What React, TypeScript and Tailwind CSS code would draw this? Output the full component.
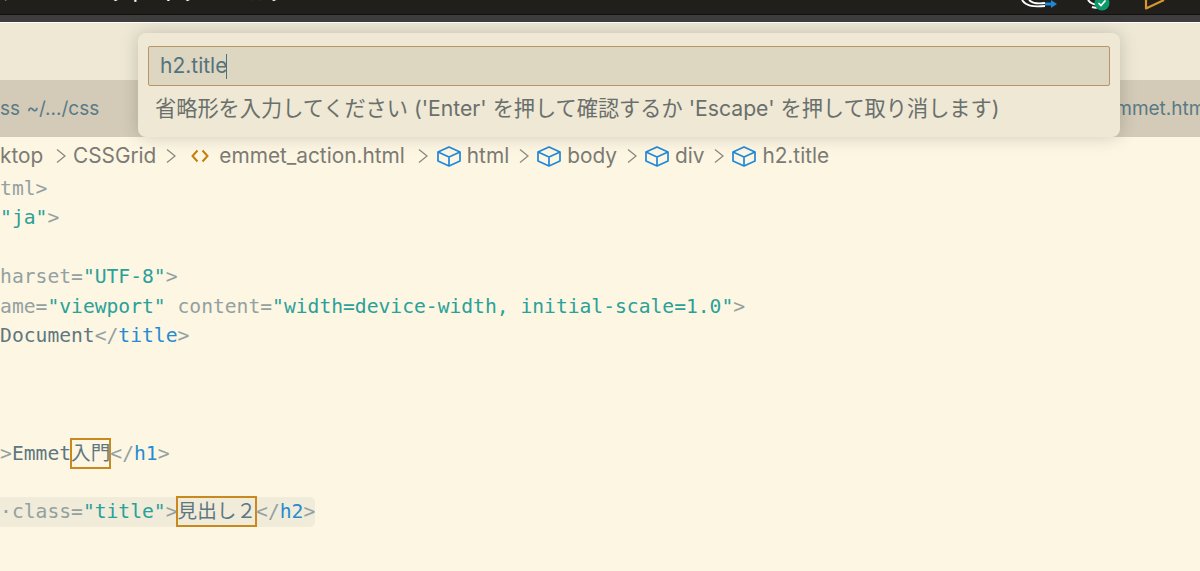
import React from "react";

const mono = "font-['DejaVu_Sans_Mono','Noto_Sans_CJK_JP',monospace]";
const sans = "font-['Inter','Noto_Sans_CJK_JP',sans-serif]";

const Chevron = () => (
  <svg width="10" height="18" viewBox="0 0 10 18" fill="none" stroke="#8a8a82" strokeWidth="1.3" className="shrink-0">
    <path d="M1 2.5 L9 9 L1 15.5" />
  </svg>
);

const Cube = () => (
  <svg width="24" height="21" viewBox="0 0 24 21" fill="none" stroke="#2088d8" strokeWidth="1.7" strokeLinejoin="round" className="shrink-0">
    <path d="M12 1 L23 6 L23 15 L12 20 L1 15 L1 6 Z" />
    <path d="M1 6 L12 11 L23 6 M12 11 L12 20" />
  </svg>
);

const B = ({ children }: { children: React.ReactNode }) => <span className="text-[#93a1a1]">{children}</span>;
const T = ({ children }: { children: React.ReactNode }) => <span className="text-[#268bd2]">{children}</span>;
const S = ({ children }: { children: React.ReactNode }) => <span className="text-[#2aa198]">{children}</span>;
const X = ({ children }: { children: React.ReactNode }) => <span className="text-[#5f777f]">{children}</span>;

const Line = ({ children }: { children?: React.ReactNode }) => (
  <div className="h-[29.4px] leading-[29px] whitespace-pre">{children}</div>
);

const Match = ({ children }: { children: React.ReactNode }) => (
  <span className="inline-block h-[29px] align-top text-[#5f777f] outline-2 -outline-offset-1 outline-[#c8891f]">{children}</span>
);

export default function App() {
  return (
    <div className="relative h-[571px] w-[1200px] overflow-hidden bg-[#fdf6e3]">
      {/* Desktop menu bar, cut off by the top of the picture */}
      <div className="h-[15px] overflow-hidden border-b border-[#111] bg-[#211f1c]">
        <div className="flex h-[15px] items-start justify-between">
          <div className={`-mt-[18px] flex gap-[34px] pl-[2px] text-[18px] font-medium leading-[24px] text-white ${sans}`}>
            <span>メニュー</span>
            <span>ウィンドウ</span>
            <span>ヘルプ</span>
          </div>
          <div className="flex items-start">
            <svg width="40" height="10" viewBox="0 0 40 10" fill="none" className="mr-[29px] shrink-0">
              <path d="M4 0 C8 6 14 7 27 6 M11 0 C15 4 20 4 27 3" stroke="#fff" strokeWidth="1.8" />
              <path d="M27 2.5 H33 V0 L39 4 L33 8 V5.5 H27 Z" fill="#1f86d6" />
            </svg>
            <svg width="24" height="12" viewBox="0 0 24 12" fill="none" className="mr-[33px] shrink-0">
              <path d="M1 0 C4 4 8 5 12 4 M5 7 C8 8 10 8 13 7" stroke="#fff" strokeWidth="2" />
              <circle cx="15" cy="3" r="7.5" fill="#0d9a6b" />
              <path d="M11.5 3 L14 5.5 L18.5 0.5" stroke="#fff" strokeWidth="1.7" />
            </svg>
            <svg width="24" height="10" viewBox="0 0 24 10" fill="none" className="mr-[32px] shrink-0">
              <path d="M2 0 L2 8.5 L20 0" stroke="#d9962a" strokeWidth="2.2" strokeLinejoin="round" />
            </svg>
          </div>
        </div>
      </div>
      <div className="h-[7px] bg-[#3d3d3d]" />
      <div className="h-[1px] bg-[#fff]" />

      {/* Title bar */}
      <div className="h-[57px] bg-[#eee8d5]" />

      {/* Tab bar */}
      <div className={`flex h-[57px] items-center justify-between bg-[#d3cbb7] pt-[1px] text-[19px] text-[#5a7a87] ${sans}`}>
        <div className="whitespace-pre">ss <span className="ml-[1px]">~/.../css</span></div>
        <div className="-mr-[10px] whitespace-pre">mmet.html</div>
      </div>

      {/* Breadcrumbs */}
      <div className={`flex h-[37px] items-center whitespace-pre pt-[1px] text-[20.8px] text-[#7b7b74] ${sans}`}>
        <span className="w-[56px]">ktop</span>
        <Chevron />
        <span className="ml-[7px]">CSSGrid</span>
        <span className="ml-[10px]"><Chevron /></span>
        <svg width="18" height="14" viewBox="0 0 18 14" fill="none" stroke="#c47f0a" strokeWidth="2" className="ml-[15px] shrink-0">
          <path d="M6.5 1.5 L1.5 7 L6.5 12.5 M11.5 1.5 L16.5 7 L11.5 12.5" />
        </svg>
        <span className="ml-[10px]">emmet_action.html</span>
        <span className="ml-[13px]"><Chevron /></span>
        <span className="ml-[9px]"><Cube /></span>
        <span className="ml-[6px]">html</span>
        <span className="ml-[10px]"><Chevron /></span>
        <span className="ml-[8px]"><Cube /></span>
        <span className="ml-[6px]">body</span>
        <span className="ml-[10px]"><Chevron /></span>
        <span className="ml-[8px]"><Cube /></span>
        <span className="ml-[6px]">div</span>
        <span className="ml-[10px]"><Chevron /></span>
        <span className="ml-[8px]"><Cube /></span>
        <span className="ml-[6px]">h2.title</span>
      </div>

      {/* Code */}
      <div className={`-ml-[130px] text-[19.65px] ${mono}`}>
        <Line><B>&lt;!DOCTYPE html&gt;</B></Line>
        <Line><B>&lt;</B><T>html</T> <B>lang=</B><S>"ja"</S><B>&gt;</B></Line>
        <Line><B>&lt;</B><T>head</T><B>&gt;</B></Line>
        <Line>    <B>&lt;</B><T>meta</T> <B>charset=</B><S>"UTF-8"</S><B>&gt;</B></Line>
        <Line>    <B>&lt;</B><T>meta</T> <B>name=</B><S>"viewport"</S> <B>content=</B><S>"width=device-width, initial-scale=1.0"</S><B>&gt;</B></Line>
        <Line>    <B>&lt;</B><T>title</T><B>&gt;</B><X>Document</X><B>&lt;/</B><T>title</T><B>&gt;</B></Line>
        <Line><B>&lt;/</B><T>head</T><B>&gt;</B></Line>
        <Line><B>&lt;</B><T>body</T><B>&gt;</B></Line>
        <Line>    <B>&lt;</B><T>div</T><B>&gt;</B></Line>
        <Line>        <B>&lt;</B><T>h1</T><B>&gt;</B><X>Emmet</X><Match>入門</Match><B>&lt;/</B><T>h1</T><B>&gt;</B></Line>
        <Line />
        <Line>        <span className="inline-block h-[30px] rounded-r-[5px] bg-[#f1ebd9] align-top"><B>&lt;</B><T>h2</T><B>·class=</B><S>"title"</S><B>&gt;</B><Match>見出し２</Match><B>&lt;/</B><T>h2</T><B>&gt;</B></span></Line>
        <Line>    <B>&lt;/</B><T>div</T><B>&gt;</B></Line>
      </div>

      {/* Command palette */}
      <div className={`absolute left-[138px] top-[33px] h-[104px] w-[982px] rounded-[8px] bg-[#eee8d5] px-[10px] pt-[13px] shadow-[0_0_18px_rgba(0,0,0,0.18)] ${sans}`}>
        <div className="flex h-[40px] items-center rounded-[2px] border border-[#b8946a] bg-[#ddd6c1] pl-[11px] text-[21px] text-[#55727f]">
          <span>h2.title</span>
          <span className="-ml-[1px] h-[25px] w-[1px] bg-[#4f6f7a]" />
        </div>
        <div className="mt-[9px] pl-[7px] text-[21.2px] leading-[26px] text-[#6a6f6c]">
          省略形を入力してください ('Enter' を押して確認するか 'Escape' を押して取り消します)
        </div>
      </div>
    </div>
  );
}
